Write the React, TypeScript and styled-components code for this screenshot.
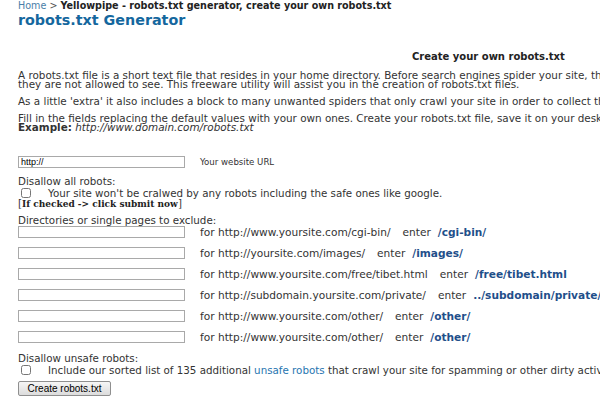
import React from 'react';
import styled, { createGlobalStyle } from 'styled-components';

const GlobalStyle = createGlobalStyle`
  html, body {
    margin: 0;
    padding: 0;
    background: #fff;
    overflow: hidden;
  }
  body {
    font-family: "DejaVu Sans", Verdana, sans-serif;
    font-size: 10.3px;
    color: #333;
  }
`;

interface IRule {
  url: string;
  path: string;
}

const rules: IRule[] = [
  { url: 'http://www.yoursite.com/cgi-bin/', path: '/cgi-bin/' },
  { url: 'http://yoursite.com/images/', path: '/images/' },
  { url: 'http://www.yoursite.com/free/tibet.html', path: '/free/tibet.html' },
  { url: 'http://subdomain.yoursite.com/private/', path: '../subdomain/private/' },
  { url: 'http://www.yoursite.com/other/', path: '/other/' },
  { url: 'http://www.yoursite.com/other/', path: '/other/' }
];

const App = () => {
  return (
    <Page>
      <GlobalStyle />
      <Breadcrumb>
        <a>Home</a> &gt; <b>Yellowpipe - robots.txt generator, create your own robots.txt</b>
      </Breadcrumb>
      <Title>robots.txt Generator</Title>
      <SubTitle>Create your own robots.txt</SubTitle>
      <Para>
        A robots.txt file is a short text file that resides in your home directory. Before search engines spider your site, they look for this file to know which pages of your site
        <br />
        they are not allowed to see. This freeware utility will assist you in the creation of robots.txt files.
      </Para>
      <Para>
        As a little 'extra' it also includes a block to many unwanted spiders that only crawl your site in order to collect the email addresses on it.
      </Para>
      <Para>
        Fill in the fields replacing the default values with your own ones. Create your robots.txt file, save it on your desktop and upload it to your root directory.
        <br />
        <b>Example:</b> <i>http://www.domain.com/robots.txt</i>
      </Para>

      <Form>
        <UrlRow>
          <TextInput defaultValue="http://" />
          <UrlLabel>Your website URL</UrlLabel>
        </UrlRow>

        <Group>
          <Label>Disallow all robots:</Label>
          <CheckRow>
            <Check type="checkbox" />
            <span>Your site won't be cralwed by any robots including the safe ones like google.</span>
          </CheckRow>
          <Hint>
            [<b>If checked -&gt; click submit now</b>]
          </Hint>
        </Group>

        <Group $gap={6}>
          <Label>Directories or single pages to exclude:</Label>
          <RuleList>
            {rules.map((r, i) => (
              <RuleRow key={i}>
                <TextInput />
                <RuleText>
                  for {r.url}
                  <Enter>enter</Enter>
                  <Path>{r.path}</Path>
                </RuleText>
              </RuleRow>
            ))}
          </RuleList>
        </Group>

        <Group $gap={9.5}>
          <Label>Disallow unsafe robots:</Label>
          <CheckRow>
            <Check type="checkbox" />
            <span>
              Include our sorted list of 135 additional <Link>unsafe robots</Link> that crawl your site for spamming or other dirty activities.
            </span>
          </CheckRow>
        </Group>

        <Button>Create robots.txt</Button>
      </Form>
    </Page>
  );
};

export default App;

const Page = styled.div`
  width: 1000px;
  padding: 0 0 0 18px;
  line-height: 10px;
  white-space: nowrap;
`;

const Breadcrumb = styled.div`
  font-size: 9.6px;
  line-height: 11px;
  color: #555;
  a {
    color: #4a7ea8;
  }
  b {
    color: #222;
  }
`;

const Title = styled.h1`
  margin: 1px 0 0;
  font-size: 14.3px;
  line-height: 16px;
  font-weight: bold;
  color: #14679e;
`;

const SubTitle = styled.div`
  margin: 24px 0 0 394px;
  font-size: 10px;
  font-weight: bold;
  color: #222;
`;

const Para = styled.p`
  margin: 8px 0 0;
  font-size: 10.4px;
  line-height: 9px;
  &:first-of-type {
    margin-top: 8.5px;
  }
`;

const Form = styled.div`
  margin-top: 24px;
  display: flex;
  flex-direction: column;
`;

const UrlRow = styled.div`
  display: flex;
  align-items: center;
  gap: 15px;
`;

const UrlLabel = styled.span`
  font-size: 8.6px;
`;

const TextInput = styled.input`
  box-sizing: border-box;
  width: 167px;
  height: 12px;
  margin: 0;
  padding: 0 2px;
  border: 1px solid #a9a9a9;
  font-family: "Liberation Sans", Arial, sans-serif;
  font-size: 9px;
  color: #000;
  outline: none;
`;

const Group = styled.div<{ $gap?: number }>`
  margin-top: ${p => p.$gap ?? 8}px;
  display: flex;
  flex-direction: column;
`;

const Label = styled.div`
  line-height: 10px;
`;

const CheckRow = styled.label`
  display: flex;
  align-items: center;
  gap: 17px;
  margin-top: 2px;
  line-height: 10px;
`;

const Check = styled.input`
  width: 10px;
  height: 10px;
  margin: 0 0 0 3px;
`;

const Hint = styled.div`
  line-height: 10px;
  b {
    font-family: "DejaVu Serif", "Liberation Serif", serif;
    font-size: 9px;
    color: #222;
  }
`;

const RuleList = styled.div`
  margin-top: 1px;
  display: flex;
  flex-direction: column;
  gap: 9.2px;
`;

const RuleRow = styled.div`
  display: flex;
  align-items: center;
  gap: 15px;
`;

const RuleText = styled.span`
  font-size: 10.6px;
`;

const Enter = styled.span`
  margin: 0 7px 0 12px;
`;

const Path = styled.b`
  color: #1f4f8a;
`;

const Link = styled.a`
  color: #1f75b0;
`;

const Button = styled.button`
  align-self: flex-start;
  margin-top: 6px;
  width: 93px;
  height: 15px;
  padding: 0;
  border: 1px solid #8f8f8f;
  border-radius: 2px;
  background: linear-gradient(#f6f6f6, #dcdcdc);
  font-family: "Liberation Sans", Arial, sans-serif;
  font-size: 10px;
  color: #000;
  line-height: 13px;
`;
